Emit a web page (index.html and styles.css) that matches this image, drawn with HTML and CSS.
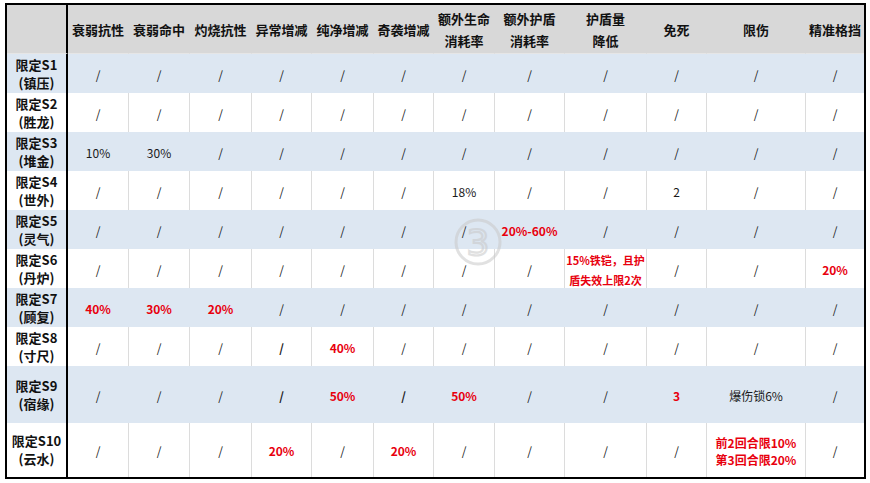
FILE: index.html
```html
<!DOCTYPE html>
<html lang="zh-CN">
<head>
<meta charset="utf-8">
<title>限定S 属性表</title>
<link rel="stylesheet" href="styles.css">
</head>
<body>
<div class="sheet">
  <div class="grid">
    <div class="row head">
      <div class="c lab"></div>
      <div class="c">衰弱抗性</div>
      <div class="c">衰弱命中</div>
      <div class="c">灼烧抗性</div>
      <div class="c">异常增减</div>
      <div class="c">纯净增减</div>
      <div class="c">奇袭增减</div>
      <div class="c">额外生命<br>消耗率</div>
      <div class="c">额外护盾<br>消耗率</div>
      <div class="c">护盾量<br>降低</div>
      <div class="c">免死</div>
      <div class="c">限伤</div>
      <div class="c">精准格挡</div>
    </div>

    <div class="row blue">
      <div class="c lab">限定S1<br>(镇压)</div>
      <div class="c">/</div><div class="c">/</div><div class="c">/</div><div class="c">/</div><div class="c">/</div><div class="c">/</div>
      <div class="c">/</div><div class="c">/</div><div class="c">/</div><div class="c">/</div><div class="c">/</div><div class="c">/</div>
    </div>

    <div class="row white">
      <div class="c lab">限定S2<br>(胜龙)</div>
      <div class="c">/</div><div class="c">/</div><div class="c">/</div><div class="c">/</div><div class="c">/</div><div class="c">/</div>
      <div class="c">/</div><div class="c">/</div><div class="c">/</div><div class="c">/</div><div class="c">/</div><div class="c">/</div>
    </div>

    <div class="row blue">
      <div class="c lab">限定S3<br>(堆金)</div>
      <div class="c">10%</div><div class="c">30%</div><div class="c">/</div><div class="c">/</div><div class="c">/</div><div class="c">/</div>
      <div class="c">/</div><div class="c">/</div><div class="c">/</div><div class="c">/</div><div class="c">/</div><div class="c">/</div>
    </div>

    <div class="row white">
      <div class="c lab">限定S4<br>(世外)</div>
      <div class="c">/</div><div class="c">/</div><div class="c">/</div><div class="c">/</div><div class="c">/</div><div class="c">/</div>
      <div class="c">18%</div><div class="c">/</div><div class="c">/</div><div class="c">2</div><div class="c">/</div><div class="c">/</div>
    </div>

    <div class="row blue">
      <div class="c lab">限定S5<br>(灵气)</div>
      <div class="c">/</div><div class="c">/</div><div class="c">/</div><div class="c">/</div><div class="c">/</div><div class="c">/</div>
      <div class="c">/</div><div class="c red">20%-60%</div><div class="c">/</div><div class="c">/</div><div class="c">/</div><div class="c">/</div>
    </div>

    <div class="row white">
      <div class="c lab">限定S6<br>(丹炉)</div>
      <div class="c">/</div><div class="c">/</div><div class="c">/</div><div class="c">/</div><div class="c">/</div><div class="c">/</div>
      <div class="c">/</div><div class="c">/</div><div class="c red small">15%铁铠，且护<br>盾失效上限2次</div><div class="c">/</div><div class="c">/</div><div class="c red">20%</div>
    </div>

    <div class="row blue">
      <div class="c lab">限定S7<br>(顾复)</div>
      <div class="c red">40%</div><div class="c red">30%</div><div class="c red">20%</div><div class="c">/</div><div class="c">/</div><div class="c">/</div>
      <div class="c">/</div><div class="c">/</div><div class="c">/</div><div class="c">/</div><div class="c">/</div><div class="c">/</div>
    </div>

    <div class="row white">
      <div class="c lab">限定S8<br>(寸尺)</div>
      <div class="c">/</div><div class="c">/</div><div class="c">/</div><div class="c b">/</div><div class="c red">40%</div><div class="c">/</div>
      <div class="c">/</div><div class="c">/</div><div class="c">/</div><div class="c">/</div><div class="c">/</div><div class="c">/</div>
    </div>

    <div class="row blue">
      <div class="c lab">限定S9<br>(宿缘)</div>
      <div class="c">/</div><div class="c">/</div><div class="c">/</div><div class="c b">/</div><div class="c red">50%</div><div class="c b">/</div>
      <div class="c red">50%</div><div class="c">/</div><div class="c">/</div><div class="c red">3</div><div class="c">爆伤锁6%</div><div class="c">/</div>
    </div>

    <div class="row white">
      <div class="c lab">限定S10<br>(云水)</div>
      <div class="c">/</div><div class="c">/</div><div class="c">/</div><div class="c red">20%</div><div class="c">/</div><div class="c red">20%</div>
      <div class="c">/</div><div class="c">/</div><div class="c">/</div><div class="c">/</div><div class="c red tight">前2回合限10%<br>第3回合限20%</div><div class="c">/</div>
    </div>
  </div>

  <svg class="mark" width="52" height="52" viewBox="0 0 52 52" aria-hidden="true">
    <circle cx="26" cy="26" r="22" fill="none" stroke="#c8c8c8" stroke-width="3" opacity="0.55"/>
    <text x="26" y="39" text-anchor="middle" font-family="DejaVu Sans, sans-serif" font-size="36" fill="none" stroke="#c8c8c8" stroke-width="2.2" opacity="0.55">3</text>
  </svg>
</div>
</body>
</html>
```

FILE: styles.css
```css
html, body {
  margin: 0;
  padding: 0;
  background: #ffffff;
}

body {
  font-family: "Noto Sans CJK SC", "Microsoft YaHei", sans-serif;
  color: #1a1a1a;
}

.sheet {
  position: relative;
  width: 870px;
  height: 483px;
  padding: 3px 0 0 5px;
  box-sizing: border-box;
}

.grid {
  display: grid;
  width: max-content;
  grid-template-columns: 61px 61px 61px 62px 60px 62px 60px 61px 70px 82px 60px 99px 58px;
  grid-template-rows: 49px repeat(8, 39px) 57px 54px;
  border: 2px solid #000;
}

.row {
  display: contents;
}

.c {
  box-sizing: border-box;
  display: flex;
  align-items: center;
  justify-content: center;
  text-align: center;
  font-size: 12px;
  line-height: 16px;
  border-right: 1px solid var(--line);
  padding-top: 2px;
  white-space: nowrap;
}

.c:last-child {
  border-right: none;
}

.head .c {
  --line: #d8d8d8;
  background: #d8d8d8;
  font-size: 13px;
  font-weight: 700;
  line-height: 22px;
  color: #111;
  border-bottom: 1px solid #e6e6e6;
}

.blue .c {
  --line: #dde7f2;
  background: #dde7f2;
}

.white .c {
  --line: #dcdcdc;
  background: #ffffff;
}

.c.lab {
  border-right: 2px solid #000;
  font-size: 13px;
  font-weight: 700;
  line-height: 18px;
  color: #111;
  padding-top: 0;
}

.red {
  color: #e8000e;
  font-weight: 700;
}

.b {
  font-weight: 700;
}

.small {
  font-size: 11px;
  line-height: 20px;
}

.tight {
  line-height: 17px;
}

.mark {
  position: absolute;
  left: 452px;
  top: 216px;
  pointer-events: none;
}
```
